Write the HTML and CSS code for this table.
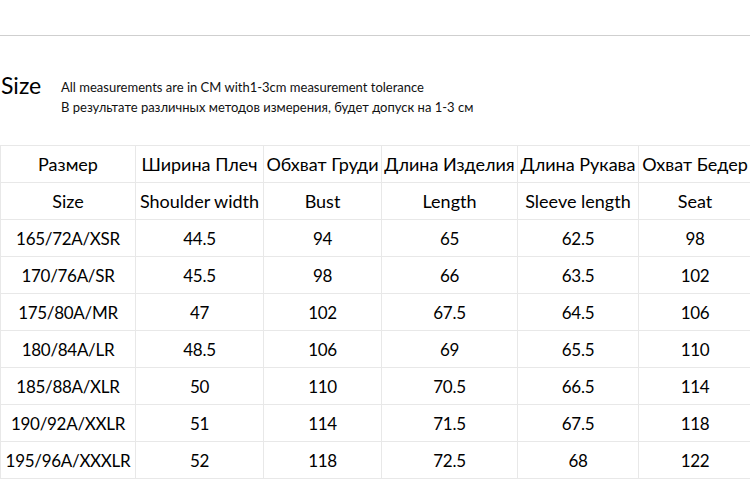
FILE: index.html
```html
<!DOCTYPE html>
<html>
<head>
<meta charset="utf-8">
<link rel="stylesheet" href="styles.css">
</head>
<body>
<div class="page">
  <div class="rule"></div>
  <div class="heading">
    <div class="title">Size</div>
    <div class="notes">
      <div class="note">All measurements are in CM with1-3cm measurement tolerance</div>
      <div class="note">В результате различных методов измерения, будет допуск на 1-3 см</div>
    </div>
  </div>
  <table class="sizes">
    <colgroup>
      <col class="c1"><col class="c2"><col class="c3"><col class="c4"><col class="c5"><col class="c6">
    </colgroup>
    <tr class="head"><td>Размер</td><td>Ширина Плеч</td><td>Обхват Груди</td><td>Длина Изделия</td><td>Длина Рукава</td><td>Охват Бедер</td></tr>
    <tr class="head"><td>Size</td><td>Shoulder width</td><td>Bust</td><td>Length</td><td>Sleeve length</td><td>Seat</td></tr>
    <tr class="data"><td>165/72A/XSR</td><td>44.5</td><td>94</td><td>65</td><td>62.5</td><td>98</td></tr>
    <tr class="data"><td>170/76A/SR</td><td>45.5</td><td>98</td><td>66</td><td>63.5</td><td>102</td></tr>
    <tr class="data"><td>175/80A/MR</td><td>47</td><td>102</td><td>67.5</td><td>64.5</td><td>106</td></tr>
    <tr class="data"><td>180/84A/LR</td><td>48.5</td><td>106</td><td>69</td><td>65.5</td><td>110</td></tr>
    <tr class="data"><td>185/88A/XLR</td><td>50</td><td>110</td><td>70.5</td><td>66.5</td><td>114</td></tr>
    <tr class="data"><td>190/92A/XXLR</td><td>51</td><td>114</td><td>71.5</td><td>67.5</td><td>118</td></tr>
    <tr class="data"><td>195/96A/XXXLR</td><td>52</td><td>118</td><td>72.5</td><td>68</td><td>122</td></tr>
  </table>
</div>
</body>
</html>
```

FILE: styles.css
```css
html, body {
  margin: 0;
  padding: 0;
  background: #fff;
}
body {
  width: 750px;
  height: 504px;
  overflow: hidden;
  font-family: Lato, "Open Sans", sans-serif;
  color: #000;
}
.page {
  padding-top: 35px;
}
.rule {
  border-top: 1px solid #cfcfcf;
  width: 750px;
}
.heading {
  display: flex;
  align-items: flex-start;
  margin-top: 36px;
  padding-left: 1px;
}
.title {
  font-size: 23px;
  line-height: 26px;
  width: 60px;
  flex: none;
}
.notes {
  padding-top: 5px;
}
.note {
  font-size: 13px;
  line-height: 20px;
  color: #111;
  white-space: nowrap;
}
.sizes {
  margin-top: 28px;
  border-collapse: collapse;
  table-layout: fixed;
  width: 751px;
}
.c1 { width: 135px; }
.c2 { width: 128px; }
.c3 { width: 118px; }
.c4 { width: 136px; }
.c5 { width: 121px; }
.c6 { width: 113px; }
.sizes td {
  border: 1px solid #e8e8e8;
  height: 36px;
  padding: 0;
  text-align: center;
  font-size: 18px;
  white-space: nowrap;
  color: #000;
}
.sizes .data td {
  font-size: 17px;
  letter-spacing: -0.3px;
}
```
